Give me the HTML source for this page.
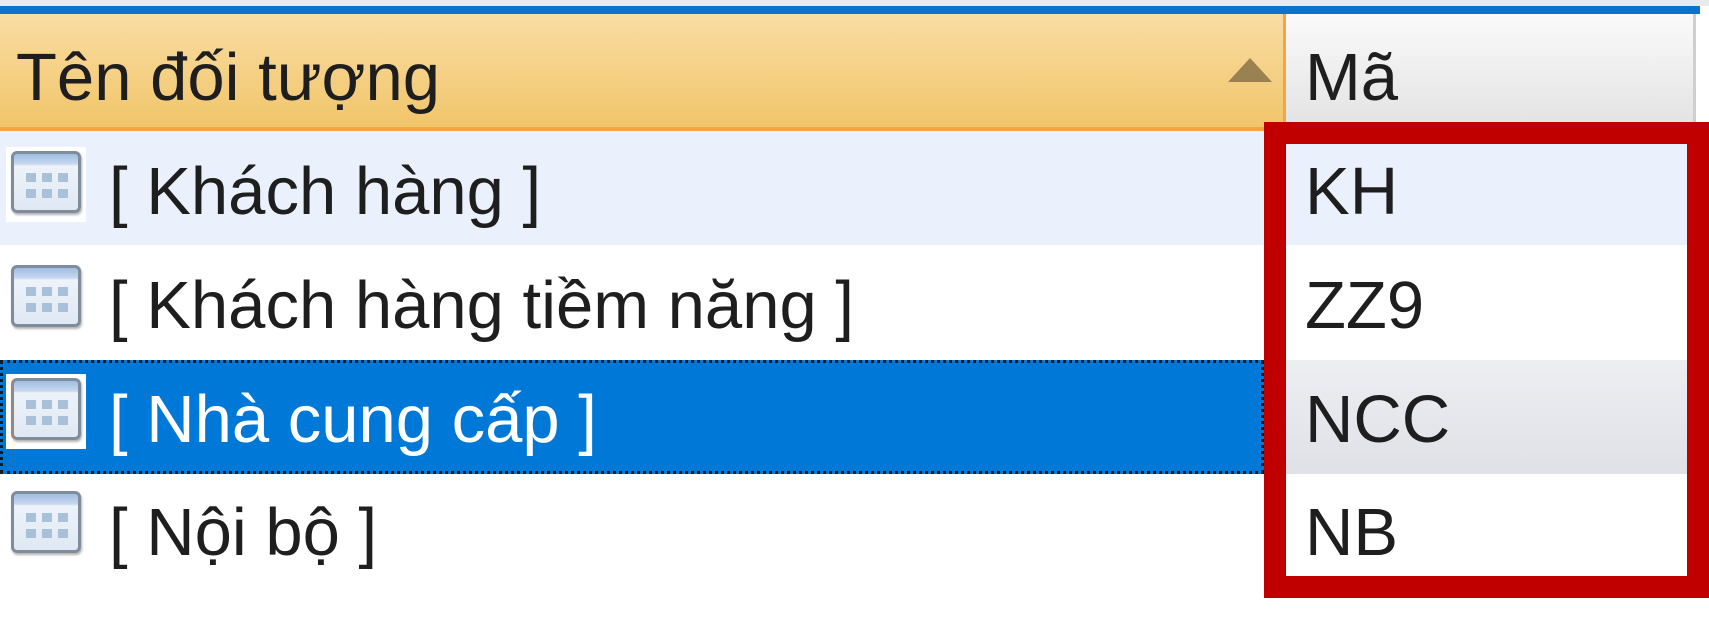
<!DOCTYPE html>
<html><head><meta charset="utf-8"><style>
*{margin:0;padding:0;box-sizing:border-box}
body{width:1709px;height:639px;background:#fff;position:relative;overflow:hidden;font-family:"Liberation Sans","DejaVu Sans",sans-serif;font-size:67px;color:#1e1e1e}
.abs{position:absolute}
.t{position:absolute;white-space:nowrap;line-height:1}
.icon{position:absolute;width:70px;height:62px;border:3px solid #7f8c99;border-radius:6px;background:linear-gradient(#9fbde4 0,#c7d8ee 10px,#eef3fa 12px,#dfe8f3 100%);box-shadow:1px 2px 2px rgba(0,0,0,.3)}
.icon i{position:absolute;width:10px;height:9px;background:#a9c0d9}
</style></head><body>
<div class="abs" style="left:0;top:0;width:1709px;height:6px;background:#e8eaee"></div>
<div class="abs" style="left:0;top:6px;width:1700px;height:8px;background:#0a74cc"></div>
<div class="abs" style="left:0;top:14px;width:1286px;height:117px;background:linear-gradient(#f9dda3,#f1c56a);border-bottom:4px solid #f2a449;border-right:3px solid #f2a449"></div>
<div class="abs" style="left:1286px;top:14px;width:410px;height:117px;background:linear-gradient(#fafafa,#e2e2e2);border-right:3px solid #cfcfcf"></div>
<div class="t" style="left:16px;top:44px">Tên đối tượng</div>
<div class="t" style="left:1305px;top:44px">Mã</div>
<svg class="abs" style="left:1226px;top:56px" width="48" height="30"><polygon points="24,2 46,26 2,26" fill="#9a8152"/></svg>

<div class="abs" style="left:0;top:131px;width:1709px;height:114px;background:#ebf1fc"></div>
<div class="abs" style="left:0;top:360px;width:1264px;height:114px;background:#0078d7;border:3px dotted #1a1a1a"></div>
<div class="abs" style="left:1264px;top:360px;width:445px;height:114px;background:linear-gradient(#eceef2,#dfe1e7)"></div>
<div class="abs" style="left:6px;top:147px;width:80px;height:75px;background:#fff"></div>
<div class="abs" style="left:6px;top:374px;width:80px;height:75px;background:#fff"></div>

<div class="icon" style="left:11px;top:151px"><i style="left:12px;top:19px"></i><i style="left:28px;top:19px"></i><i style="left:44px;top:19px"></i><i style="left:12px;top:35px"></i><i style="left:28px;top:35px"></i><i style="left:44px;top:35px"></i></div>
<div class="icon" style="left:11px;top:265px"><i style="left:12px;top:19px"></i><i style="left:28px;top:19px"></i><i style="left:44px;top:19px"></i><i style="left:12px;top:35px"></i><i style="left:28px;top:35px"></i><i style="left:44px;top:35px"></i></div>
<div class="icon" style="left:11px;top:378px"><i style="left:12px;top:19px"></i><i style="left:28px;top:19px"></i><i style="left:44px;top:19px"></i><i style="left:12px;top:35px"></i><i style="left:28px;top:35px"></i><i style="left:44px;top:35px"></i></div>
<div class="icon" style="left:11px;top:491px"><i style="left:12px;top:19px"></i><i style="left:28px;top:19px"></i><i style="left:44px;top:19px"></i><i style="left:12px;top:35px"></i><i style="left:28px;top:35px"></i><i style="left:44px;top:35px"></i></div>

<div class="t" style="left:109px;top:158px">[ Khách hàng ]</div>
<div class="t" style="left:109px;top:272px">[ Khách hàng tiềm năng ]</div>
<div class="t" style="left:109px;top:386px;color:#fff">[ Nhà cung cấp ]</div>
<div class="t" style="left:109px;top:499px">[ Nội bộ ]</div>

<div class="t" style="left:1305px;top:158px">KH</div>
<div class="t" style="left:1305px;top:272px">ZZ9</div>
<div class="t" style="left:1305px;top:386px">NCC</div>
<div class="t" style="left:1305px;top:499px">NB</div>

<div class="abs" style="left:1264px;top:122px;width:445px;height:476px;border:22px solid #c00000"></div>
</body></html>
